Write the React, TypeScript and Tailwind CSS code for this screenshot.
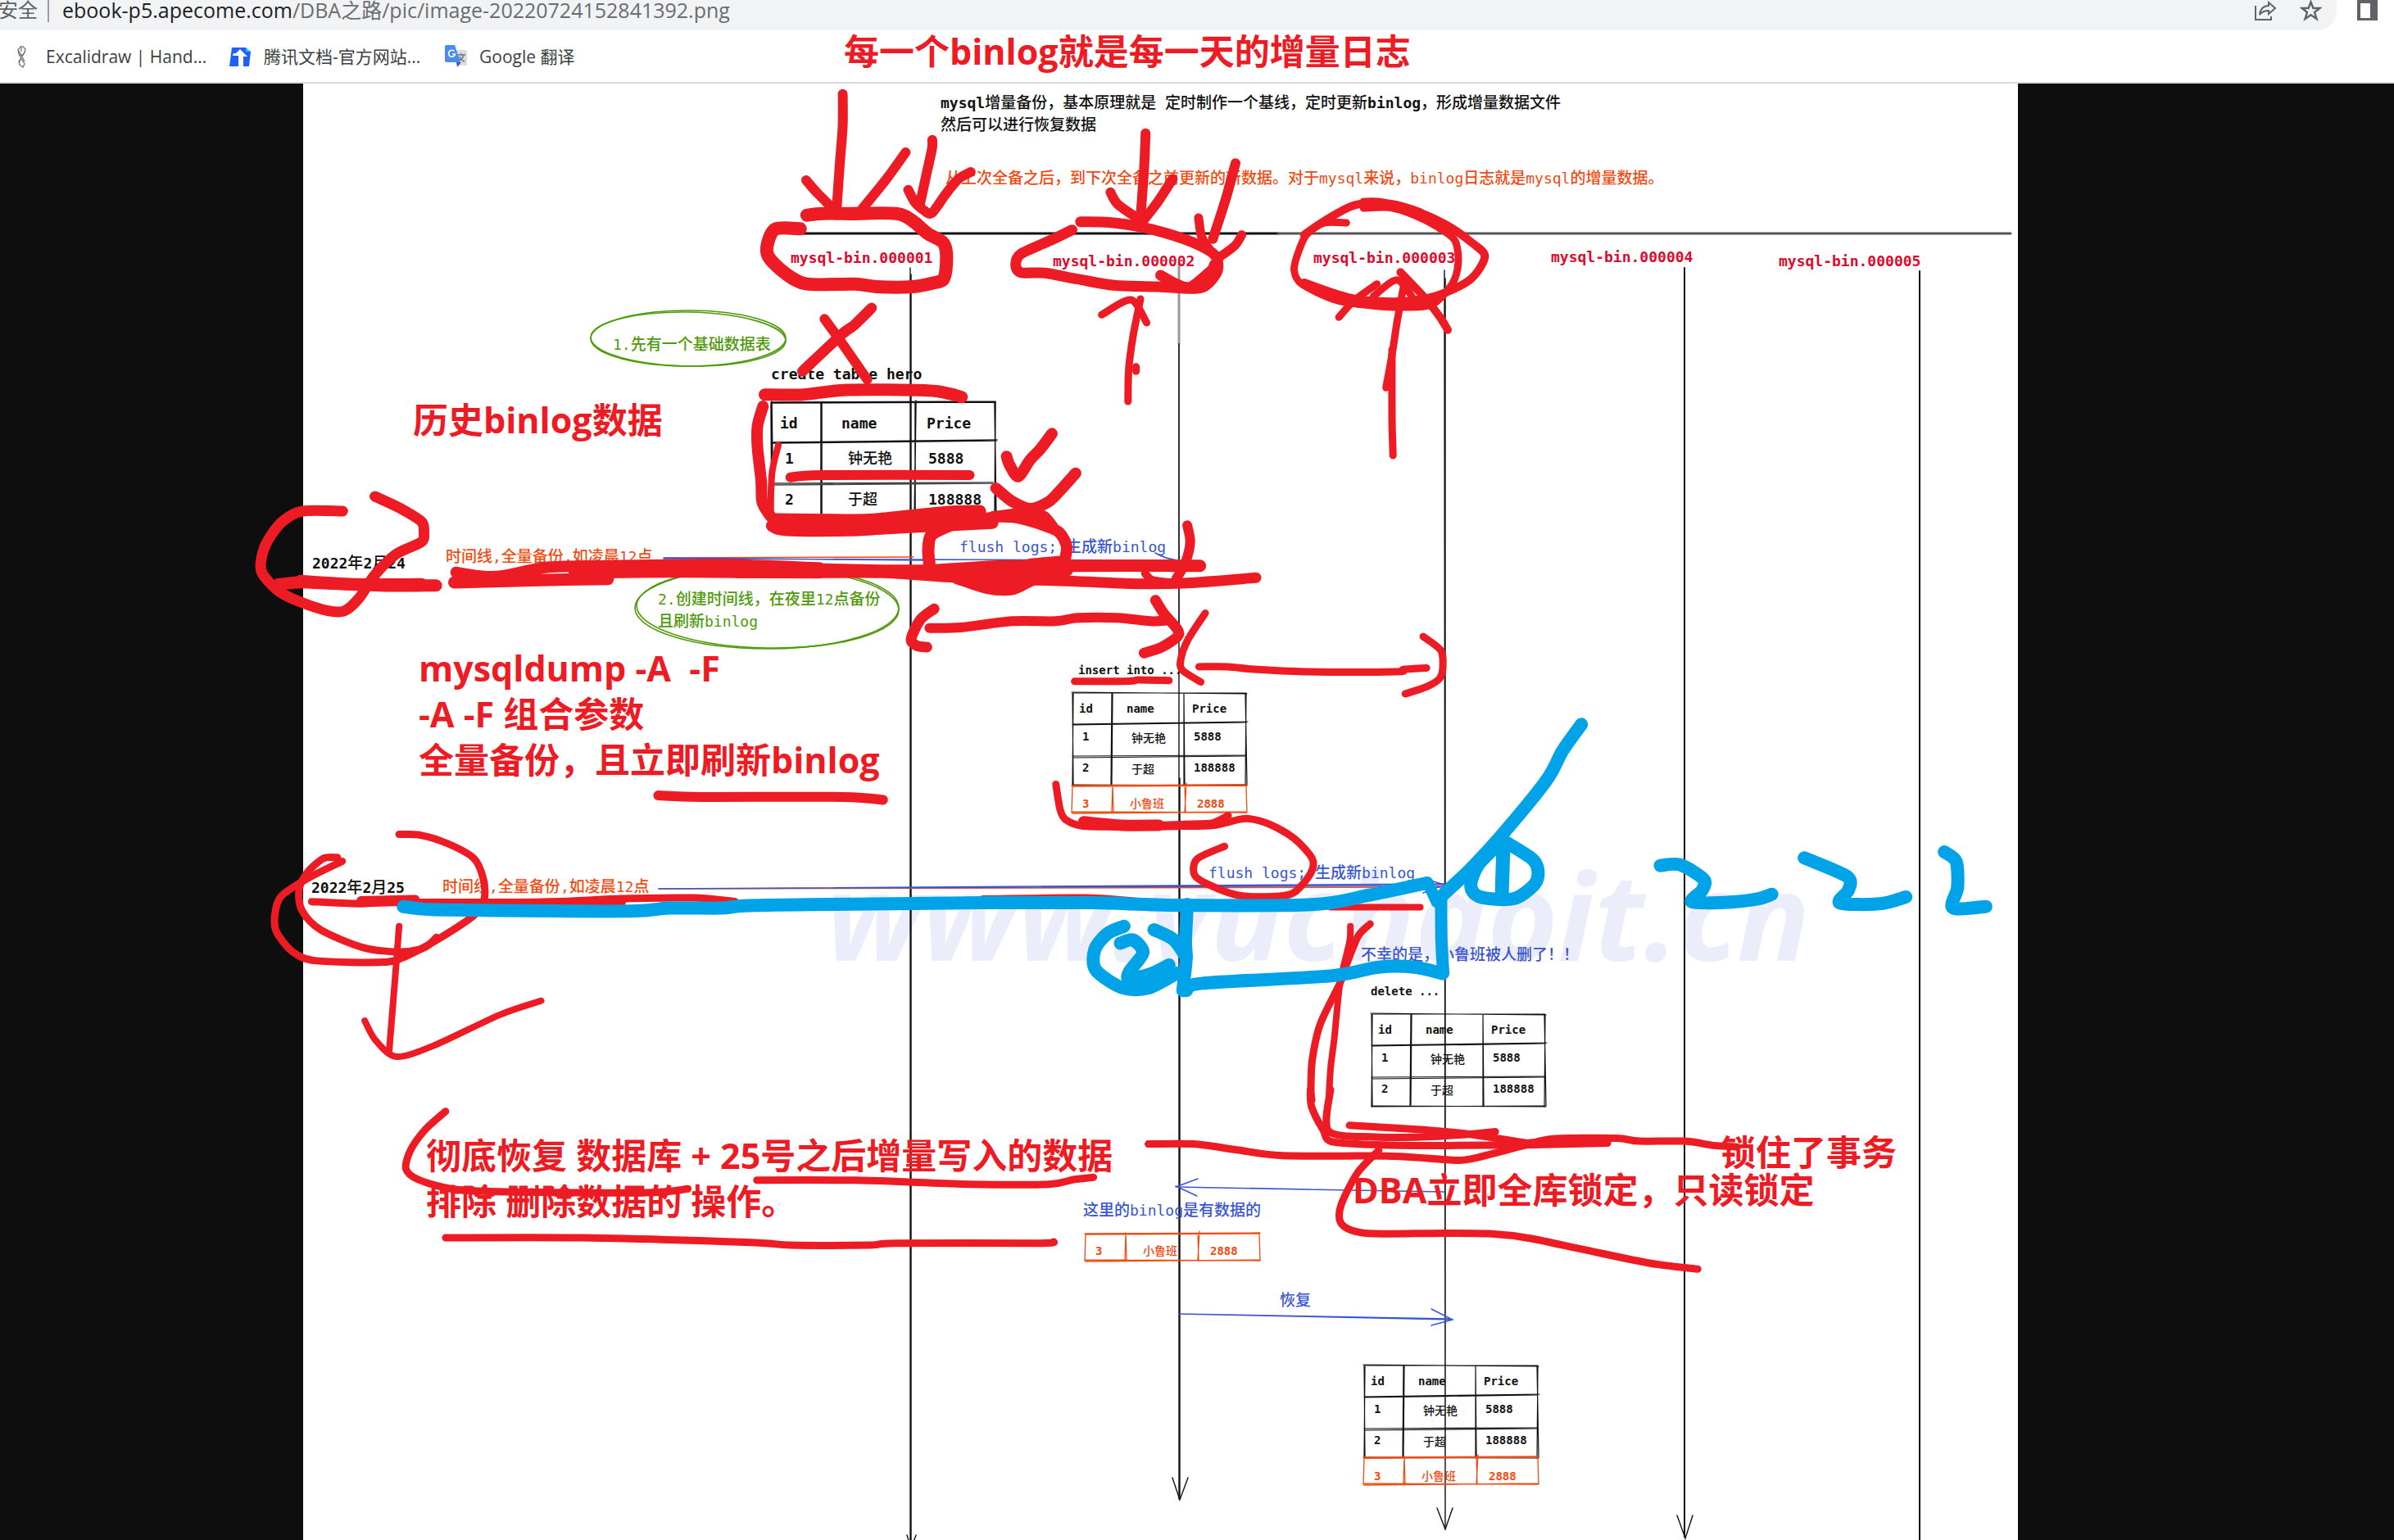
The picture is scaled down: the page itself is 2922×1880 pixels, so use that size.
import React from "react";

const RED = "#ed1c24";
const BLUE = "#00a2e8";
const INK = "#111111";
const NOTE_BLUE = "#3a56cf";
const ORANGE = "#f04b12";
const GREEN = "#4f9a0a";

/* ---------- freehand strokes ---------- */

type Stroke = [width: number, points: string];
type Sheet = { x: number; y: number; sx: number; sy: number; strokes: Stroke[] };

/** Turns a list of pen positions into one smooth curve. */
function curve(points: string, sheet: Sheet): string {
  const p = points.split(" ").map((pair) => {
    const [a, b] = pair.split(",").map(Number);
    return [sheet.x + a / sheet.sx, sheet.y + b / sheet.sy];
  });
  let d = `M${p[0][0].toFixed(1)} ${p[0][1].toFixed(1)}`;
  for (let i = 0; i < p.length - 1; i++) {
    const a = p[Math.max(i - 1, 0)];
    const b = p[i];
    const c = p[i + 1];
    const e = p[Math.min(i + 2, p.length - 1)];
    const k = 7;
    d += `C${[b[0] + (c[0] - a[0]) / k, b[1] + (c[1] - a[1]) / k, c[0] - (e[0] - b[0]) / k, c[1] - (e[1] - b[1]) / k, c[0], c[1]]
      .map((n) => n.toFixed(1))
      .join(" ")}`;
  }
  return d;
}

const redSheets: Sheet[] = [
  {
    x: 900, y: 0, sx: 2.24, sy: 3,
    strokes: [
      [12, "288,344 288,460 280,600 272,755"],
      [12, "188,660 215,702 262,765"],
      [12, "460,558 405,660 335,775"],
      [12, "533,512 532,545 515,650 498,755"],
      [12, "467,695 485,740 510,770 532,780 570,710 605,655 638,630"],
      [16, "190,788 230,782 300,782 435,782 480,810 520,855 560,885 571,920 570,990 562,1025 540,1035 480,1050 380,1050 320,1040 190,1040 130,1000 85,940 83,890 105,838 172,838"],
      [14, "260,765 300,785 400,782"],
      [13, "938,812 1010,814 1110,833 1220,875 1290,918 1312,950 1310,1000 1265,1055 1150,1050 1030,1045 930,1022 840,1000 775,998 761,970 775,930 860,878 915,842"],
      [13, "1157,1008 1200,1040 1240,1050 1300,985"],
      [14, "1250,1050 1290,1030 1305,970"],
      [12, "1116,488 1112,620 1102,800"],
      [12, "1020,704 1040,748 1100,805"],
      [12, "1190,655 1150,738 1110,808"],
      [12, "1362,598 1335,730 1300,875"],
      [11, "1261,798 1270,870 1300,930"],
      [11, "1379,860 1360,900 1315,945"],
      [13, "367,1128 320,1190 285,1225 178,1360"],
      [12, "238,1168 280,1245 355,1390"],
      [9, "1102,1095 1082,1230 1070,1350 1068,1470"],
      [9, "996,1153 1076,1098 1119,1182"],
      [9, "1090,1343 1090,1360"],
    ],
  },
  {
    x: 1500, y: 80, sx: 1.633, sy: 3,
    strokes: [
      [9, "234,576 190,576 155,618 137,690 130,750 145,800 215,860 300,882 350,885 405,875 445,800 457,720 450,640 415,590 370,548 320,520 268,522"],
      [10, "268,500 300,500 360,525 430,580 485,650 510,700 480,785 410,845 330,865 240,850 150,795"],
      [10, "150,620 185,575 240,518 268,505"],
      [12, "275,508 330,512 380,540"],
      [10, "200,845 250,870 340,875 405,868"],
      [9, "350,790 335,940 325,1060 313,1180"],
      [9, "325,1040 325,1290 327,1428"],
      [9, "219,922 250,860 295,800"],
      [9, "288,845 335,785 370,860"],
      [10, "342,757 390,850 420,920 436,968"],
    ],
  },
  {
    x: 300, y: 360, sx: 2.24, sy: 3,
    strokes: [
      [13, "265,792 155,792 100,830 60,900 42,970 45,1020 90,1085 150,1125 225,1157 270,1157 310,1110 350,1030 410,950 480,905 487,870 480,830 420,780 353,738"],
      [15, "90,1060 150,1052 200,1055 390,1065 520,1064"],
      [15, "150,1048 300,1060 480,1060"],
      [14, "575,1016 640,1030 700,1030 830,997 1000,992 1300,988 1568,1000"],
      [15, "570,1053 800,1045 990,1040"],
      [16, "900,1015 1200,1012 1568,1015"],
    ],
  },
  {
    x: 900, y: 360, sx: 2.24, sy: 3,
    strokes: [
      [15, "0,992 220,1005 500,1010 700,995 900,992 1265,992"],
      [13, "0,1018 200,1018 400,1018 600,1035 900,1048 1100,1058 1230,1055 1418,1036"],
      [16, "500,1015 900,1008"],
      [13, "600,1040 680,1075 750,1080 800,1050 850,1020"],
      [18, "640,1040 780,1050"],
      [14, "700,812 760,815 840,845 880,870 900,920 895,975"],
      [15, "525,985 522,935 530,880 580,845"],
      [10, "800,980 890,970"],
      [15, "75,365 180,365 300,348 520,350 580,362 613,374"],
      [14, "70,408 55,480 55,560 65,680 68,760 90,810"],
      [8, "112,550 95,650 90,790"],
      [15, "100,822 300,825 380,822 560,797 663,792"],
      [15, "95,845 130,860 300,862 400,855 540,845 697,835"],
      [16, "100,845 300,850 500,840 690,820"],
      [12, "145,668 230,660 635,660"],
      [14, "736,592 745,625 768,665 800,605 830,562 860,508"],
      [14, "707,708 750,755 800,783 850,758 880,720 925,653"],
      [12, "700,810 800,795 840,810 870,860"],
      [12, "1230,844 1238,905 1225,980 1200,1040"],
      [10, "1115,1020 1135,1045 1200,1055"],
      [12, "525,1220 610,1218 750,1195 870,1195 930,1183 1040,1183 1130,1195 1180,1192"],
      [13, "538,1150 500,1190 475,1260 490,1285 518,1290"],
      [13, "1143,1118 1165,1165 1203,1225 1203,1252 1160,1290 1112,1312"],
    ],
  },
  {
    x: 1200, y: 720, sx: 2.24, sy: 2.8,
    strokes: [
      [9, "607,80 560,170 540,240 545,275 595,315"],
      [9, "590,263 670,263 740,272 880,280 1130,280 1150,272 1212,267"],
      [9, "1203,160 1250,205 1257,250 1250,300 1215,330 1154,356"],
      [9, "250,313 400,312 425,308 508,310"],
      [9, "199,665 210,750 225,785 270,807 400,810 540,808 620,800 670,772"],
      [14, "275,793 380,805 480,805"],
      [10, "480,806 630,800"],
      [9, "540,808 630,805 700,785 730,783 780,800 850,850 900,920 895,970 850,1035 800,1048 700,1045 620,1010 578,975 585,920 660,877"],
      [8, "950,1085 1195,1085"],
      [6, "0,1053 280,1049 450,1064"],
    ],
  },
  {
    x: 1600, y: 850, sx: 1.742, sy: 3,
    strokes: [
      [9, "126,834 100,880 72,1000 62,1050 20,1200 3,1330 0,1440 2,1480"],
      [8, "84,842 82,900 62,1050 50,1250 42,1360 38,1480"],
    ],
  },
  {
    x: 1250, y: 1330, sx: 1.4255, sy: 2.851,
    strokes: [
      [9, "498,0 500,60 520,140 538,183 640,194 740,195 870,193 1015,187"],
      [9, "533,0 530,145 610,165 720,163 820,147"],
      [9, "566,125 690,140 760,152 880,188"],
      [9, "216,190 295,190 370,210 450,230 640,232 740,245 775,243 870,195 920,172 1030,170 1070,180 1150,180 1200,195 1240,200"],
      [11, "880,188 940,182 1010,182"],
      [9, "617,212 580,290 552,400 550,460 570,490 610,502 730,500 810,502 880,518 980,560 1090,605 1172,625"],
    ],
  },
  {
    x: 300, y: 780, sx: 1.742, sy: 2.8,
    strokes: [
      [12, "877,535 970,540 1270,540 1355,550"],
      [9, "326,668 370,670 430,700 485,750 505,820 507,890 485,945 410,1025 340,1085 290,1105 150,1100 100,1070 65,1000 62,940 75,880 130,820 205,760"],
      [9, "195,747 165,750 130,800 113,860 120,930 160,995 250,1055 330,1070 380,1055 405,1020"],
      [9, "140,898 240,905 330,900 620,900 800,888 950,885 1040,897"],
      [11, "245,895 360,890"],
      [10, "350,905 800,898"],
      [8, "326,982 318,1150 305,1405"],
      [8, "253,1305 275,1370 320,1428 400,1390 540,1285 628,1237"],
    ],
  },
  {
    x: 450, y: 1330, sx: 1.6505, sy: 3,
    strokes: [
      [9, "155,80 115,145 85,220 75,290 100,330 170,365 280,375 560,378 643,364"],
      [9, "782,332 980,332 1080,338 1210,347 1370,347 1420,330 1460,322"],
      [9, "155,543 430,543 770,560 850,570 1010,570 1060,563 1350,563 1380,558"],
    ],
  },
];

const blueSheets: Sheet[] = [
  {
    x: 300, y: 780, sx: 1.742, sy: 2.8,
    strokes: [[16, "335,915 400,925 650,930 830,930 900,920 1010,920 1060,912 1200,908 1568,902"]],
  },
  {
    x: 1200, y: 720, sx: 2.24, sy: 2.8,
    strokes: [
      [16, "0,1070 300,1070 530,1078 900,1076 1050,1045 1210,1003"],
      [14, "1215,1000 1240,1068"],
      [15, "1252,1050 1253,1200 1258,1310"],
      [16, "555,1370 600,1345 950,1320 1080,1290 1180,1290 1256,1312"],
      [16, "558,1075 553,1200 555,1260 546,1370"],
      [16, "385,1150 340,1175 305,1230 308,1300 380,1360 450,1362 530,1310"],
      [16, "467,1162 520,1195 555,1255"],
      [16, "375,1208 410,1197 437,1240 400,1305 400,1330 460,1312 508,1282"],
    ],
  },
  {
    x: 1600, y: 850, sx: 1.742, sy: 3,
    strokes: [
      [16, "575,103 535,200 500,310 400,520 335,640 270,745"],
      [16, "415,535 470,595 483,640 475,690 430,742 360,735 340,695 355,620 400,540"],
      [17, "409,560 406,725"],
      [16, "743,620 785,617 835,670 832,710 810,753 880,755 950,742 980,725"],
      [16, "1049,592 1140,660 1143,710 1125,757 1210,760 1265,735"],
      [16, "1347,570 1372,605 1375,700 1365,775 1435,770"],
    ],
  },
];

function Ink({ sheets, color }: { sheets: Sheet[]; color: string }) {
  return (
    <g fill="none" stroke={color} strokeLinecap="round" strokeLinejoin="round">
      {sheets.flatMap((sheet, i) =>
        sheet.strokes.map(([w, pts], j) => <path key={`${i}-${j}`} d={curve(pts, sheet)} strokeWidth={w} />),
      )}
    </g>
  );
}

/* ---------- diagram line work ---------- */

function SmallGrid({ x, y }: { x: number; y: number }) {
  return (
    <g transform={`translate(${x} ${y})`} strokeWidth="1.2">
      <path d="M-1-1L213 1M0 0L212 0M0 0L1 112M1 1L0 113M212 0L211 113M211 1L213 112M48 0L47 112M49 1L48 111M136 0L137 112M136 1L136 113" />
      <path d="M0 38L214 35M1 39L212 36M0 77L212 76M1 79L211 77M0 113L212 112M1 112L213 113" />
    </g>
  );
}

function OrangeRow({ x, y }: { x: number; y: number }) {
  return (
    <g transform={`translate(${x} ${y})`} stroke={ORANGE} strokeWidth="1.3">
      <path d="M-1 0L213-1M0 1L212 0M0 0L-1 33M212 0L213 33M49-1L50 32M49 1L48 33M137 0L138 33M139-3L137 32M-1 32L212 33M0 34L213 32" />
    </g>
  );
}

function DiagramLines() {
  return (
    <svg className="absolute left-0 top-0" width="2922" height="1880" fill="none" stroke={INK} strokeLinecap="round" aria-hidden="true">
      <path d="M980 285H1560" strokeWidth="3" />
      <path d="M1560 285H2454" stroke="#555" strokeWidth="3" />
      <g strokeWidth="1.4">
        <path d="M1111 327V1880M1112 335V1880" />
        <path d="M1107 1874L1112 1890L1118 1874" />
        <path d="M1439 322V420" stroke="#999" strokeWidth="3" />
        <path d="M1439 420V760" stroke="#333" strokeWidth="2" />
        <path d="M1439 760V1830M1440 950V1830" />
        <path d="M1431 1804L1440 1831L1450 1804" />
        <path d="M1763 330L1764 1864M1764 340V1864" />
        <path d="M1754 1841L1764 1867L1773 1841" />
        <path d="M2056 327V1876" strokeWidth="2" />
        <path d="M2047 1850L2057 1878L2066 1850" />
        <path d="M2343 331V1880" strokeWidth="2" />
      </g>

      <g stroke={GREEN} strokeWidth="1.6">
        <ellipse cx="840" cy="413" rx="119" ry="34" />
        <ellipse cx="840" cy="414" rx="119" ry="33" transform="rotate(1 840 414)" />
        <ellipse cx="936" cy="742" rx="161" ry="50" />
        <ellipse cx="937" cy="742" rx="160" ry="49" transform="rotate(1 937 742)" />
      </g>

      <g stroke={ORANGE} strokeWidth="1.6">
        <path d="M812 681L1115 680" />
        <path d="M804 1085L1762 1083" />
      </g>
      <g stroke={NOTE_BLUE} strokeWidth="1.5">
        <path d="M810 682L1439 684M810 681L1130 684M1410 675Q1422 682 1437 684" />
        <path d="M804 1085L1763 1081M804 1085L1763 1079M1740 1073L1763 1080L1737 1090" />
        <path d="M1763 1455L1435 1449L1462 1439M1435 1448L1461 1460M1600 1452L1435 1449" />
        <path d="M1439 1604L1773 1611M1439 1604L1770 1610M1747 1598L1773 1611L1747 1618" />
      </g>

      <g strokeWidth="1.5">
        <path d="M941 491L1215 490M942 492L1214 491M942 490L944 640M941 492L942 640M1215 490L1214 640M1214 492L1216 640" />
        <path d="M1002 491V640M1003 492V640M1118 489L1116 640M1117 492L1117 640M944 540L1217 537M943 541L1216 538" />
        <path d="M944 590L1212 589M944 592L1211 590" stroke="#444" />
      </g>
      <SmallGrid x={1309} y={846} />
      <OrangeRow x={1309} y={959} />
      <SmallGrid x={1674} y={1238} />
      <SmallGrid x={1665} y={1667} />
      <OrangeRow x={1665} y={1779} />
      <OrangeRow x={1325} y={1506} />
    </svg>
  );
}

/* ---------- text ---------- */

const MONO = "font-['DejaVu_Sans_Mono','Noto_Sans_CJK_SC',monospace] font-medium";

function Note({ className, children }: { className: string; children: React.ReactNode }) {
  return <p className={`absolute whitespace-pre text-[19px] leading-[26px] ${MONO} ${className}`}>{children}</p>;
}

/** Latin words inside a note, one step smaller than the Chinese around them. */
function L({ children }: { children: React.ReactNode }) {
  return <span className="text-[18px]">{children}</span>;
}

/** The same, in the heavier weight used for black and crimson words. */
function B({ children }: { children: React.ReactNode }) {
  return <span className="text-[18px] font-bold">{children}</span>;
}

function Marker({ className, children }: { className: string; children: React.ReactNode }) {
  return (
    <p
      className={`absolute whitespace-pre font-['Open_Sans','Noto_Sans_CJK_SC',sans-serif] text-[43px] font-bold leading-[56px] text-[#ed1c24] ${className}`}
    >
      {children}
    </p>
  );
}

const heroes = [
  ["1", "钟无艳", "5888"],
  ["2", "于超", "188888"],
];
const luban = ["3", "小鲁班", "2888"];

function BigTable() {
  return (
    <table className={`absolute left-[942px] top-[490px] table-fixed text-left text-[18px] leading-[26px] ${MONO}`}>
      <colgroup>
        <col className="w-[61px]" />
        <col className="w-[114px]" />
        <col className="w-[98px]" />
      </colgroup>
      <thead>
        <tr className="h-[49px]">
          <th className="p-0 pl-[10px] pt-1 font-bold">id</th>
          <th className="p-0 pl-6 pt-1 font-bold">name</th>
          <th className="p-0 pl-[14px] pt-1 font-bold">Price</th>
        </tr>
      </thead>
      <tbody>
        {heroes.map(([id, name, price]) => (
          <tr key={id} className="h-[50px]">
            <td className="p-0 pb-2 pl-4 font-bold">{id}</td>
            <td className="p-0 pb-2 pl-8">{name}</td>
            <td className="p-0 pb-2 pl-4 font-bold">{price}</td>
          </tr>
        ))}
      </tbody>
    </table>
  );
}

function SmallTable({ className, withHead, rows }: { className: string; withHead: boolean; rows: string[][] }) {
  return (
    <table className={`absolute table-fixed text-left text-[14px] leading-5 ${MONO} ${className}`}>
      <colgroup>
        <col className="w-[48px]" />
        <col className="w-[88px]" />
        <col className="w-[76px]" />
      </colgroup>
      {withHead && (
        <thead>
          <tr className="h-[38px]">
            <th className="p-0 pl-2 font-bold">id</th>
            <th className="p-0 pl-[18px] font-bold">name</th>
            <th className="p-0 pl-[10px] font-bold">Price</th>
          </tr>
        </thead>
      )}
      <tbody>
        {rows.map(([id, name, price]) =>
          id === "3" ? (
            <tr key={id} className="h-[34px] text-[#f04b12]">
              <td className="p-0 pl-3 pt-2 font-bold">{id}</td>
              <td className="p-0 pl-[22px] pt-2">{name}</td>
              <td className="p-0 pl-4 pt-2 font-bold">{price}</td>
            </tr>
          ) : (
            <tr key={id} className="h-[38px]">
              <td className="p-0 pb-2 pl-3 font-bold">{id}</td>
              <td className="p-0 pb-1 pl-6">{name}</td>
              <td className="p-0 pb-2 pl-3 font-bold">{price}</td>
            </tr>
          ),
        )}
      </tbody>
    </table>
  );
}

function Diagram() {
  return (
    <div className="absolute inset-0 text-[#111111]">
      <p className="absolute left-[1008px] top-[1016px] whitespace-pre font-['Open_Sans',sans-serif] text-[148px] font-bold italic leading-[200px] text-[#ebedfa]">
        www.yuchaoit.cn
      </p>
      <DiagramLines />

      <Note className="left-[1148px] top-[112px]">
        <B>mysql</B>增量备份，基本原理就是<L> </L>定时制作一个基线，定时更新<B>binlog</B>，形成增量数据文件{"\n"}然后可以进行恢复数据
      </Note>
      <Note className="left-[1154px] top-[204px] text-[#f04b12]">
        从上次全备之后，到下次全备之前更新的新数据。对于<L>mysql</L>来说，<L>binlog</L>日志就是<L>mysql</L>的增量数据。
      </Note>

      <Note className="left-[965px] top-[301px] text-[#dc0a2d]"><B>mysql-bin.000001</B></Note>
      <Note className="left-[1285px] top-[305px] text-[#dc0a2d]"><B>mysql-bin.000002</B></Note>
      <Note className="left-[1603px] top-[301px] text-[#dc0a2d]"><B>mysql-bin.000003</B></Note>
      <Note className="left-[1893px] top-[300px] text-[#dc0a2d]"><B>mysql-bin.000004</B></Note>
      <Note className="left-[2171px] top-[305px] text-[#dc0a2d]"><B>mysql-bin.000005</B></Note>

      <Note className="left-[748px] top-[407px] text-[#4f9a0a]"><L>1.</L>先有一个基础数据表</Note>
      <Note className="left-[803px] top-[718px] text-[#4f9a0a]">
        <L>2.</L>创建时间线，在夜里<L>12</L>点备份{"\n"}且刷新<L>binlog</L>
      </Note>

      <Note className="left-[941px] top-[443px]"><B>create table hero</B></Note>
      <BigTable />

      <Note className="left-[381px] top-[674px]"><B>2022</B>年<B>2</B>月<B>24</B></Note>
      <Note className="left-[544px] top-[666px] text-[#f04b12]">时间线<L>,</L>全量备份<L>,</L>如凌晨<L>12</L>点</Note>
      <Note className="left-[1171px] top-[654px] text-[#3a56cf]"><L>flush logs; </L>生成新<L>binlog</L></Note>

      <p className={`absolute left-[1316px] top-[808px] text-[14px] leading-5 ${MONO}`}><strong>insert into ...</strong></p>
      <SmallTable className="left-[1309px] top-[846px]" withHead rows={[...heroes, luban]} />

      <Note className="left-[380px] top-[1070px]"><B>2022</B>年<B>2</B>月<B>25</B></Note>
      <Note className="left-[540px] top-[1069px] text-[#f04b12]">时间线<L>,</L>全量备份<L>,</L>如凌晨<L>12</L>点</Note>
      <Note className="left-[1475px] top-[1052px] text-[#3a56cf]"><L>flush logs; </L>生成新<L>binlog</L></Note>

      <Note className="left-[1661px] top-[1152px] text-[#3a56cf]">不幸的是，小鲁班被人删了！！</Note>
      <p className={`absolute left-[1673px] top-[1200px] text-[14px] leading-5 ${MONO}`}><strong>delete ...</strong></p>
      <SmallTable className="left-[1674px] top-[1238px]" withHead rows={heroes} />

      <Note className="left-[1322px] top-[1464px] text-[#3a56cf]">这里的<L>binlog</L>是有数据的</Note>
      <SmallTable className="left-[1325px] top-[1506px]" withHead={false} rows={[luban]} />
      <Note className="left-[1562px] top-[1574px] text-[#3a56cf]">恢复</Note>
      <SmallTable className="left-[1665px] top-[1667px]" withHead rows={[...heroes, luban]} />
    </div>
  );
}

function Annotations() {
  return (
    <div className="pointer-events-none absolute inset-0">
      <svg className="absolute left-0 top-0" width="2922" height="1880" aria-hidden="true">
        <Ink sheets={redSheets} color={RED} />
        <Ink sheets={blueSheets} color={BLUE} />
      </svg>
      <Marker className="left-[1030px] top-[35px]">每一个binlog就是每一天的增量日志</Marker>
      <Marker className="left-[504px] top-[485px]">历史binlog数据</Marker>
      <Marker className="left-[511px] top-[788px]">{"mysqldump -A  -F\n-A -F 组合参数\n全量备份，且立即刷新binlog"}</Marker>
      <Marker className="left-[520px] top-[1383px]">{"彻底恢复 数据库 + 25号之后增量写入的数据\n排除 删除数据的 操作。"}</Marker>
      <Marker className="left-[2100px] top-[1379px]">锁住了事务</Marker>
      <Marker className="left-[1651px] top-[1425px]">DBA立即全库锁定，只读锁定</Marker>
    </div>
  );
}

/* ---------- browser chrome ---------- */

function ExcalidrawIcon() {
  return (
    <svg width="26" height="28" viewBox="0 0 26 28" fill="none" stroke="#777" strokeWidth="1.3" aria-hidden="true">
      <path d="M12 1L8 6L9 11L16 23L14 27L10 24L9 20L16 9L17 5L13 1M12 2V8M9 7L16 20M16 8L9 22M10 12L15 12" />
    </svg>
  );
}

function TencentIcon() {
  return (
    <svg width="26" height="24" viewBox="0 0 26 24" aria-hidden="true">
      <path d="M3 1H20L26 6L24 24H0Z" fill="#1e5fff" />
      <path d="M20 1L26 6H20Z" fill="#1fd0e8" />
      <path d="M13 3L22 12H17V24H11V11H4L5 8H8Z" fill="#fff" />
    </svg>
  );
}

function TranslateIcon() {
  return (
    <svg width="28" height="27" viewBox="0 0 28 27" aria-hidden="true">
      <path d="M10 6h15a2 2 0 0 1 2 2v15a2 2 0 0 1-2 2H15z" fill="#dcdcdc" />
      <path d="M15 12h10M20 10v2M23 12c-1 4-4 6-6 7M18 14c1 3 3 5 6 6" stroke="#6b7a89" strokeWidth="1.5" fill="none" />
      <path d="M14 21h6l-5 6z" fill="#3b5fc0" />
      <path d="M2 0h10l7 21H2a2 2 0 0 1-2-2V2a2 2 0 0 1 2-2z" fill="#4a8af4" />
      <path d="M11.500 7.500a4 4 0 1 0 1 3.500H9" stroke="#fff" strokeWidth="1.700" fill="none" />
    </svg>
  );
}

function Chrome() {
  return (
    <header className="bg-white font-['Open_Sans','Noto_Sans_CJK_SC',sans-serif]">
      <div className="flex h-[37px] items-start">
        <div className="flex h-full flex-1 items-start rounded-br-[24px] bg-[#f1f3f4] pr-[18px]">
          <span className="-ml-[2px] text-[24px] leading-6 text-[#5f6368]">安全</span>
          <span className="ml-3 h-[27px] w-[2px] bg-[#9a9da1]" />
          <span className="ml-4 flex-1 whitespace-nowrap text-[25px] leading-6 text-[#202124]">
            ebook-p5.apecome.com<span className="text-[#6a6d71]">/DBA之路/pic/image-20220724152841392.png</span>
          </span>
          <button type="button" aria-label="分享" className="mr-7">
            <svg width="28" height="26" viewBox="0 0 28 26" fill="none" stroke="#5f6368" strokeWidth="2" aria-hidden="true">
              <path d="M2 7V24H21V20" />
              <path d="M18 3L26 10L18 17V13C13 13 10 14 7 18C8 11 12 7 18 7Z" />
            </svg>
          </button>
          <button type="button" aria-label="收藏">
            <svg width="27" height="26" viewBox="0 0 27 26" fill="none" stroke="#5f6368" strokeWidth="2.400" aria-hidden="true">
              <path d="M13.500 2.500L16.400 10H24.500L18 15L20.500 23L13.500 18.300L6.500 23L9 15L2.500 10H10.600Z" />
            </svg>
          </button>
        </div>
        <div className="w-[70px] pl-[25px]">
          <button type="button" aria-label="侧边栏" className="block">
            <svg width="25" height="25" viewBox="0 0 25 25" aria-hidden="true">
              <path d="M0 0H25V25H0Z" fill="#5f6368" />
              <path d="M4 4H16V22H4Z" fill="#fff" />
            </svg>
          </button>
        </div>
      </div>
      <nav className="flex h-[65px] items-center border-b-2 border-[#dadada] pl-[14px] text-[21px] leading-[30px] text-[#3c4043]">
        <a href="#excalidraw" className="flex w-[266px] items-center gap-4 whitespace-nowrap">
          <ExcalidrawIcon />
          Excalidraw | Hand...
        </a>
        <a href="#docs" className="flex w-[263px] items-center gap-4 whitespace-nowrap">
          <TencentIcon />
          腾讯文档-官方网站...
        </a>
        <a href="#translate" className="flex items-center gap-[14px] whitespace-nowrap">
          <TranslateIcon />
          Google 翻译
        </a>
      </nav>
    </header>
  );
}

export default function App() {
  return (
    <div className="relative flex min-h-screen flex-col overflow-hidden bg-[#0e0e0e]">
      <Chrome />
      <main className="flex flex-1">
        <div className="w-[370px]" />
        <div className="flex-1 bg-white" />
        <div className="w-[459px]" />
      </main>
      <Diagram />
      <Annotations />
    </div>
  );
}
